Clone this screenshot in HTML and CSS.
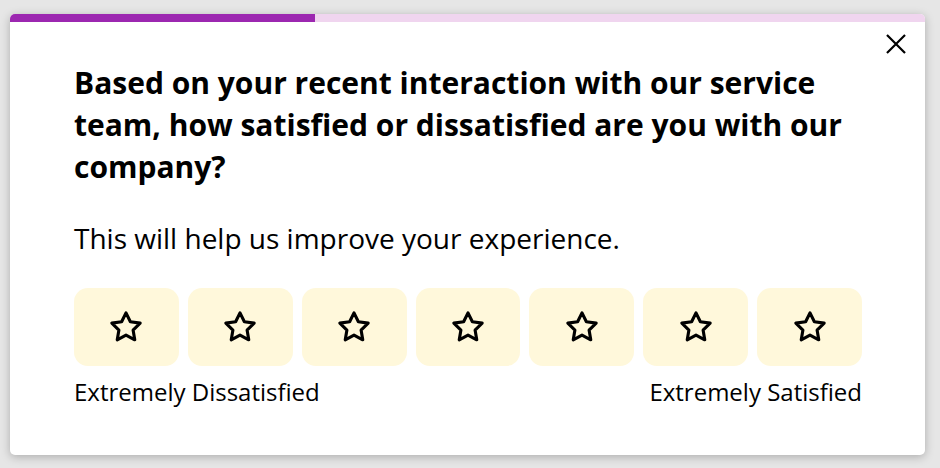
FILE: index.html
```html
<!DOCTYPE html>
<html lang="en">
<head>
  <meta charset="UTF-8" />
  <meta name="viewport" content="width=device-width, initial-scale=1.0" />
  <title>Survey</title>
  <link rel="stylesheet" href="styles.css">
</head>
<body>
  <div class="survey">
    <div class="progress"><div class="progress-fill" style="width: 33.33%"></div></div>

    <button class="close-btn" aria-label="Close">
      <svg viewBox="0 0 24 24" width="22" height="22" fill="none" stroke="#000" stroke-width="2.4" stroke-linecap="square">
        <path d="M3 3 L21 21 M21 3 L3 21" />
      </svg>
    </button>

    <div class="content">
      <h1 class="question">Based on your recent interaction with our service team, how satisfied or dissatisfied are you with our company?</h1>
      <p class="hint">This will help us improve your experience.</p>

      <div class="rating">
        <button class="star-btn" aria-label="1 star"><svg class="star" viewBox="0 0 24 24"><polygon points="12 2 15.09 8.26 22 9.27 17 14.14 18.18 21.02 12 17.77 5.82 21.02 7 14.14 2 9.27 8.91 8.26 12 2" /></svg></button>
        <button class="star-btn" aria-label="2 stars"><svg class="star" viewBox="0 0 24 24"><polygon points="12 2 15.09 8.26 22 9.27 17 14.14 18.18 21.02 12 17.77 5.82 21.02 7 14.14 2 9.27 8.91 8.26 12 2" /></svg></button>
        <button class="star-btn" aria-label="3 stars"><svg class="star" viewBox="0 0 24 24"><polygon points="12 2 15.09 8.26 22 9.27 17 14.14 18.18 21.02 12 17.77 5.82 21.02 7 14.14 2 9.27 8.91 8.26 12 2" /></svg></button>
        <button class="star-btn" aria-label="4 stars"><svg class="star" viewBox="0 0 24 24"><polygon points="12 2 15.09 8.26 22 9.27 17 14.14 18.18 21.02 12 17.77 5.82 21.02 7 14.14 2 9.27 8.91 8.26 12 2" /></svg></button>
        <button class="star-btn" aria-label="5 stars"><svg class="star" viewBox="0 0 24 24"><polygon points="12 2 15.09 8.26 22 9.27 17 14.14 18.18 21.02 12 17.77 5.82 21.02 7 14.14 2 9.27 8.91 8.26 12 2" /></svg></button>
        <button class="star-btn" aria-label="6 stars"><svg class="star" viewBox="0 0 24 24"><polygon points="12 2 15.09 8.26 22 9.27 17 14.14 18.18 21.02 12 17.77 5.82 21.02 7 14.14 2 9.27 8.91 8.26 12 2" /></svg></button>
        <button class="star-btn" aria-label="7 stars"><svg class="star" viewBox="0 0 24 24"><polygon points="12 2 15.09 8.26 22 9.27 17 14.14 18.18 21.02 12 17.77 5.82 21.02 7 14.14 2 9.27 8.91 8.26 12 2" /></svg></button>
      </div>

      <div class="labels">
        <span>Extremely Dissatisfied</span>
        <span>Extremely Satisfied</span>
      </div>
    </div>
  </div>
</body>
</html>
```

FILE: styles.css
```css
body {
  font-family: 'Open Sans', sans-serif;
  background-color: #e6e6e6;
  margin: 0;
  padding: 14px 15px 13px 10px;
  color: #000;
}

.survey {
  position: relative;
  background-color: #fff;
  border-radius: 5px;
  overflow: hidden;
  box-shadow: 0 2px 10px rgba(0, 0, 0, 0.25);
}

.progress {
  height: 8px;
  background-color: #f0d5ef;
}

.progress-fill {
  height: 100%;
  background-color: #9c27b0;
}

.close-btn {
  position: absolute;
  top: 19px;
  right: 18px;
  padding: 0;
  border: none;
  background: none;
  cursor: pointer;
  line-height: 0;
}

.content {
  padding: 40px 63px 48px 64px;
}

.question {
  font-size: 30px;
  font-weight: 700;
  line-height: 42px;
  margin: 0 0 30px;
}

.hint {
  font-size: 28px;
  line-height: 40px;
  margin: 0 0 30px;
}

.rating {
  display: flex;
  gap: 9px;
}

.star-btn {
  flex: 1;
  height: 78px;
  border: none;
  border-radius: 14px;
  background-color: #fff8db;
  cursor: pointer;
  display: flex;
  align-items: center;
  justify-content: center;
}

.star {
  width: 34px;
  height: 34px;
  fill: none;
  stroke: #000;
  stroke-width: 2.2;
  stroke-linejoin: round;
}

.labels {
  display: flex;
  justify-content: space-between;
  font-size: 24px;
  line-height: 30px;
  margin-top: 11px;
}
```
